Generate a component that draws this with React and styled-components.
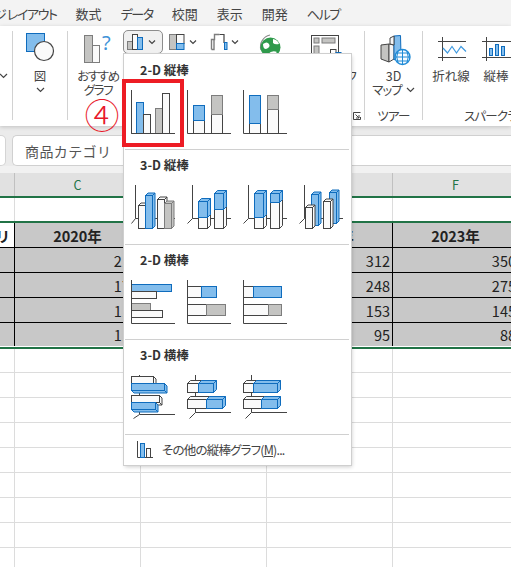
import React from "react";
import styled, { createGlobalStyle } from "styled-components";

const Global = createGlobalStyle`
  html, body { margin: 0; padding: 0; background: #fff; }
  * { box-sizing: border-box; }
`;

const C = {
  dark: "#444",
  white: "#fafafa",
  blue: "#83bdec",
  blueS: "#0f6cbd",
  gray: "#c4c4c2",
  grayS: "#7d7d7d",
  green: "#217346",
};
const fills = {
  w: [C.white, C.dark],
  b: [C.blue, C.blueS],
  g: [C.gray, C.grayS],
};

const Page = styled.div`
  position: relative;
  width: 511px;
  height: 567px;
  overflow: hidden;
  background: #fff;
  color: #444;
  font-family: "Noto Sans CJK JP", "Noto Sans", sans-serif;
  font-feature-settings: "palt";
`;
const TabBar = styled.nav`
  display: flex;
  gap: 19px;
  height: 26px;
  align-items: center;
  background: #f3f3f3;
  font-size: 13px;
  white-space: nowrap;
  overflow: hidden;
`;
const Tab = styled.span`
  margin-left: ${(p) => p.$offset || 0}px;
  letter-spacing: ${(p) => (p.$kana ? -1.4 : 0)}px;
`;
const Ribbon = styled.section`
  position: relative;
  display: flex;
  height: 100px;
  background: #fff;
  box-shadow: 0 1px 4px rgba(0, 0, 0, 0.18);
`;
const Sep = styled.div`
  flex: none;
  width: 1px;
  margin: 5px 0 6px;
  background: #d2d2d2;
`;
const Group = styled.div`
  flex: none;
  width: ${(p) => p.$w}px;
  display: flex;
  flex-direction: column;
  padding-top: 5px;
`;
const GroupBody = styled.div`
  display: flex;
  height: 78px;
  padding-left: ${(p) => p.$pad || 0}px;
`;
const GroupFooter = styled.div`
  display: flex;
  height: 14px;
  align-items: center;
  justify-content: ${(p) => p.$align || "center"};
  padding-left: ${(p) => p.$pad || 0}px;
  padding-right: ${(p) => p.$padR || 0}px;
  font-size: 12.5px;
  line-height: 14px;
  letter-spacing: -0.8px;
  white-space: nowrap;
`;
const BigButton = styled.div`
  flex: none;
  width: ${(p) => p.$w}px;
  margin-left: ${(p) => p.$ml || 0}px;
  display: flex;
  flex-direction: column;
  align-items: center;
  font-size: 12.5px;
  line-height: 14px;
  white-space: nowrap;
`;
const KanaLabel = styled.span`
  letter-spacing: -${(p) => p.$tight || 0.9}px;
`;
const Slot = styled.svg`
  display: block;
  flex: none;
  width: ${(p) => p.$w}px;
  height: 38px;
`;
const SmallRow = styled.div`
  flex: none;
  width: 132px;
  display: flex;
  align-items: flex-start;
`;
const SmallButton = styled.div`
  flex: none;
  width: ${(p) => p.$w}px;
  height: 24px;
  margin-top: -1px;
  border-radius: 5px;
  border: 1px solid ${(p) => (p.$active ? "#8c8c8c" : "transparent")};
  background: ${(p) => (p.$active ? "#f0f0f0" : "transparent")};
`;
const SmallIcon = styled.svg`
  display: block;
  width: 100%;
  height: 100%;
  overflow: visible;
`;
const ChevronMark = styled.svg`
  display: ${(p) => (p.$inline ? "inline-block" : "block")};
  width: 9px;
  height: 6px;
  margin-left: ${(p) => (p.$inline ? 4 : 0)}px;
  vertical-align: 2px;
`;
const ChevronRow = styled.div`
  display: flex;
  height: 14px;
  align-items: center;
  justify-content: ${(p) => (p.$start ? "flex-start" : "center")};
  margin-left: ${(p) => p.$ml || 0}px;
`;
const LauncherIcon = styled.svg`
  display: block;
  flex: none;
  width: 8px;
  height: 8px;
`;
const FormulaBack = styled.div`
  height: 9px;
  background: #ebebeb;
`;
const FormulaBar = styled.div`
  display: flex;
  gap: 6px;
  height: 31px;
  background: #ebebeb;
`;
const NameBox = styled.div`
  flex: none;
  width: 6px;
  background: #fff;
  border: 1px solid #d4d4d4;
  border-left: none;
  border-radius: 0 5px 5px 0;
`;
const FormulaInput = styled.div`
  flex: 1;
  display: flex;
  align-items: center;
  padding-left: 12px;
  background: #fff;
  border: 1px solid #d0d0d0;
  border-right: none;
  border-radius: 5px 0 0 5px;
  color: #555;
  font-size: 14px;
  letter-spacing: 0.4px;
  font-feature-settings: normal;
`;
const SheetGap = styled.div`
  height: 7px;
  background: #f1f1f1;
`;
const Row = styled.div`
  display: grid;
  grid-template-columns: 15px repeat(4, 126px) 1fr;
  height: ${(p) => p.$h || 25}px;
  border-top: ${(p) => (p.$greenTop ? `2px solid ${C.green}` : "none")};
  border-bottom: ${(p) => (p.$greenBottom ? `2px solid ${C.green}` : "none")};
  padding-bottom: ${(p) => (p.$greenBottom ? 1 : 0)}px;
`;
const HeaderCell = styled.div`
  display: flex;
  align-items: center;
  justify-content: center;
  background: #e1e1e1;
  border-right: 1px solid #c0c0c0;
  color: ${C.green};
  font-size: 12.5px;
`;
const GridCell = styled.div`
  border-right: 1px solid #dcdcdc;
  border-bottom: ${(p) => (p.$line ? "1px solid #dcdcdc" : "none")};
`;
const DataCell = styled.div`
  display: flex;
  align-items: center;
  justify-content: ${(p) => (p.$head ? "center" : "flex-end")};
  padding-right: ${(p) => (p.$head ? 0 : 2)}px;
  background: ${(p) => (p.$plain ? "#fff" : "#c8c8c8")};
  border-right: 1px solid #000;
  border-bottom: ${(p) => (p.$last ? "none" : "1px solid #000")};
  color: #222;
  font-size: 14.5px;
  font-weight: ${(p) => (p.$head ? 700 : 400)};
  white-space: nowrap;
  overflow: hidden;
  font-feature-settings: normal;
`;
const KeyCell = styled(DataCell)`
  justify-content: flex-end;
  padding-right: 4px;
`;
const Menu = styled.div`
  position: absolute;
  left: 124px;
  top: 54px;
  width: 227px;
  height: 411px;
  padding-top: 1px;
  background: #fff;
  box-shadow: 0 0 0 1px #cfcfcf, 1px 2px 4px rgba(0, 0, 0, 0.2);
`;
const MenuSection = styled.div`
  height: 95px;
  padding-top: 6px;
  position: relative;
`;
const MenuDivider = styled.div`
  position: absolute;
  left: 1px;
  right: 2px;
  bottom: 0;
  height: 1px;
  background: #d0d0d0;
`;
const MenuTitle = styled.div`
  height: 17px;
  margin: 0 0 12px 16px;
  font-size: 12.5px;
  line-height: 17px;
  font-weight: 700;
  color: #333;
  font-feature-settings: normal;
`;
const ChartRow = styled.div`
  display: flex;
  gap: 12px;
  padding-left: 7px;
`;
const ChartIcon = styled.svg`
  display: block;
  flex: none;
  width: 44px;
  height: 44px;
`;
const MenuFooter = styled.div`
  display: flex;
  align-items: center;
  gap: 9px;
  height: 29px;
  padding-left: 13px;
  font-size: 12.5px;
  letter-spacing: -0.8px;
  color: #444;
`;
const Underlined = styled.span`
  text-decoration: underline;
`;
const Highlight = styled.div`
  position: absolute;
  left: 122px;
  top: 79px;
  width: 62px;
  height: 68px;
  border: 4px solid #ed1c24;
`;
const StepMark = styled.div`
  position: absolute;
  left: 82px;
  top: 93px;
  width: 40px;
  height: 42px;
  display: flex;
  align-items: center;
  justify-content: center;
  color: #e8182a;
  font-size: 35px;
  font-weight: 300;
  line-height: 42px;
  font-feature-settings: normal;
`;

const Chevron = ({ inline }) => (
  <ChevronMark $inline={inline} viewBox="0 0 9 6">
    <path d="M1 1l3.5 3.5L8 1" fill="none" stroke="#444" strokeWidth="1.2" />
  </ChevronMark>
);

const R = ({ x, y, x2, y2, k }) => (
  <rect x={x} y={y} width={x2 - x} height={y2 - y} fill={fills[k][0]} stroke={fills[k][1]} />
);
const Axes2D = () => <path d="M.5 0V43.5H44" fill="none" stroke={C.dark} />;
const Axes3D = ({ x = 5.5, y = 33.5 }) => (
  <path d={`M${x} 0V${y}H44M${x} ${y}L0.5 ${y + 5}`} fill="none" stroke={C.dark} />
);
const Box3D = ({ x, y, w, h, k, d = 2.5, top = true }) => (
  <g fill={fills[k][0]} stroke={fills[k][1]}>
    {top && <polygon points={`${x},${y} ${x + d},${y - d} ${x + w + d},${y - d} ${x + w},${y}`} />}
    <polygon points={`${x + w},${y} ${x + w + d},${y - d} ${x + w + d},${y + h - d} ${x + w},${y + h}`} />
    <rect x={x} y={y} width={w} height={h} />
  </g>
);
const HBox = ({ x, y, w, h, k, d = 2.5 }) => (
  <g fill={fills[k][0]} stroke={fills[k][1]}>
    <polygon points={`${x + w},${y} ${x + w + d},${y + d} ${x + w + d},${y + h + d} ${x + w},${y + h}`} />
    <polygon points={`${x},${y + h} ${x + w},${y + h} ${x + w + d},${y + h + d} ${x + d},${y + h + d}`} />
    <rect x={x} y={y} width={w} height={h} />
  </g>
);
const SBox = ({ x, y, w, h, k, d = 3 }) => <Box3D x={x} y={y} w={w} h={h} k={k} d={d} />;

const Icon = ({ children }) => <ChartIcon viewBox="0 0 44 44">{children}</ChartIcon>;

const Column2D = [
  <Icon key="a">
    <Axes2D />
    <R x={5.5} y={12.5} x2={12.5} y2={43.5} k="b" />
    <R x={12.5} y={24.5} x2={19.5} y2={43.5} k="w" />
    <R x={24.5} y={18.5} x2={31.5} y2={43.5} k="g" />
    <R x={31.5} y={3.5} x2={38.5} y2={43.5} k="w" />
    <Axes2D />
  </Icon>,
  <Icon key="b">
    <R x={6.5} y={30.5} x2={17.5} y2={43.5} k="w" />
    <R x={6.5} y={15.5} x2={17.5} y2={30.5} k="b" />
    <R x={24.5} y={24.5} x2={35.5} y2={43.5} k="w" />
    <R x={24.5} y={5.5} x2={35.5} y2={24.5} k="g" />
    <Axes2D />
  </Icon>,
  <Icon key="c">
    <R x={6.5} y={33.5} x2={17.5} y2={43.5} k="w" />
    <R x={6.5} y={5.5} x2={17.5} y2={33.5} k="b" />
    <R x={24.5} y={19.5} x2={35.5} y2={43.5} k="w" />
    <R x={24.5} y={5.5} x2={35.5} y2={19.5} k="g" />
    <Axes2D />
  </Icon>,
];

const Column3D = [
  <Icon key="a">
    <Axes3D x={4.5} />
    <Box3D x={7.5} y={20.5} w={7} h={23} k="w" />
    <Box3D x={14.5} y={10.5} w={7} h={33} k="b" />
    <Box3D x={26.5} y={14.5} w={7} h={29} k="w" />
    <Box3D x={33.5} y={18.5} w={7} h={25} k="g" />
  </Icon>,
  <Icon key="b">
    <Axes3D />
    <SBox x={11.5} y={32.5} w={9} h={11} k="w" />
    <SBox x={11.5} y={16.5} w={9} h={16} k="b" />
    <SBox x={27.5} y={24.5} w={9} h={19} k="w" />
    <SBox x={27.5} y={8.5} w={9} h={16} k="b" />
  </Icon>,
  <Icon key="c">
    <Axes3D />
    <SBox x={11.5} y={32.5} w={9} h={11} k="w" />
    <SBox x={11.5} y={8.5} w={9} h={24} k="b" />
    <SBox x={27.5} y={17.5} w={9} h={26} k="w" />
    <SBox x={27.5} y={8.5} w={9} h={9} k="b" />
  </Icon>,
  <Icon key="d">
    <Axes3D />
    <Box3D x={12.5} y={9.5} w={7} h={31} k="b" />
    <Box3D x={30.5} y={7.5} w={7} h={31} k="b" />
    <Box3D x={6.5} y={22.5} w={7} h={21} k="w" />
    <Box3D x={24.5} y={16.5} w={7} h={27} k="w" />
  </Icon>,
];

const Bar2D = [
  <Icon key="a">
    <R x={0.5} y={4.5} x2={40.5} y2={11.5} k="b" />
    <R x={0.5} y={11.5} x2={25.5} y2={18.5} k="w" />
    <R x={0.5} y={23.5} x2={19.5} y2={30.5} k="g" />
    <R x={0.5} y={30.5} x2={31.5} y2={37.5} k="w" />
    <Axes2D />
  </Icon>,
  <Icon key="b">
    <R x={0.5} y={6.5} x2={14.5} y2={17.5} k="w" />
    <R x={14.5} y={6.5} x2={29.5} y2={17.5} k="b" />
    <R x={0.5} y={24.5} x2={19.5} y2={35.5} k="w" />
    <R x={19.5} y={24.5} x2={38.5} y2={35.5} k="g" />
    <Axes2D />
  </Icon>,
  <Icon key="c">
    <R x={0.5} y={6.5} x2={10.5} y2={17.5} k="w" />
    <R x={10.5} y={6.5} x2={38.5} y2={17.5} k="b" />
    <R x={0.5} y={24.5} x2={25.5} y2={35.5} k="w" />
    <R x={25.5} y={24.5} x2={38.5} y2={35.5} k="g" />
    <Axes2D />
  </Icon>,
];

const HAxes = ({ y = 37.5, x = 8.5 }) => (
  <path d={`M${x} 0V${y}H44M${x} ${y}L2.5 ${y + 6}`} fill="none" stroke={C.dark} />
);

const Bar3D = [
  <Icon key="a">
    <path d="M8.5 0V3M8.5 16V21M8.5 36V39.5H44M8.5 39.5L2.5 43.5" fill="none" stroke={C.dark} />
    <HBox x={0.5} y={1.5} w={22} h={7} k="w" />
    <HBox x={0.5} y={8.5} w={33} h={7} k="b" />
    <HBox x={0.5} y={20.5} w={28} h={7} k="w" />
    <HBox x={0.5} y={27.5} w={24} h={7} k="b" />
  </Icon>,
  <Icon key="b">
    <HAxes />
    <SBox x={0.5} y={8.5} w={11} h={9} k="w" />
    <SBox x={11.5} y={8.5} w={15} h={9} k="b" />
    <SBox x={0.5} y={24.5} w={19} h={9} k="w" />
    <SBox x={19.5} y={24.5} w={16} h={9} k="b" />
  </Icon>,
  <Icon key="c">
    <HAxes />
    <SBox x={0.5} y={8.5} w={10} h={9} k="w" />
    <SBox x={10.5} y={8.5} w={24} h={9} k="b" />
    <SBox x={0.5} y={24.5} w={18} h={9} k="w" />
    <SBox x={18.5} y={24.5} w={16} h={9} k="b" />
  </Icon>,
];

const sections = [
  { title: "2-D 縦棒", icons: Column2D },
  { title: "3-D 縦棒", icons: Column3D },
  { title: "2-D 横棒", icons: Bar2D },
  { title: "3-D 横棒", icons: Bar3D },
];

const rows = [
  ["215", "300", "312", "350"],
  ["171", "220", "248", "275"],
  ["112", "140", "153", "145"],
  ["117", "100", "95", "88"],
];

const BlankRow = ({ h, line = true, greenTop, greenBottom }) => (
  <Row $h={h} $greenTop={greenTop} $greenBottom={greenBottom}>
    {[0, 1, 2, 3, 4, 5].map((i) => (
      <GridCell key={i} $line={line} />
    ))}
  </Row>
);

export default function App() {
  return (
    <Page>
      <Global />
      <TabBar>
        <Tab $offset={-29} $kana>ページ レイアウト</Tab>
        <Tab>数式</Tab>
        <Tab $kana>データ</Tab>
        <Tab>校閲</Tab>
        <Tab>表示</Tab>
        <Tab>開発</Tab>
        <Tab $kana>ヘルプ</Tab>
      </TabBar>
      <Ribbon>
        <Group $w={12}>
          <GroupBody>
            <BigButton $w={12}>
              <Slot $w={12} viewBox="0 0 12 38" />
              <ChevronRow $start $ml={-5}>
                <Chevron />
              </ChevronRow>
            </BigButton>
          </GroupBody>
        </Group>
        <Sep />
        <Group $w={54}>
          <GroupBody>
            <BigButton $w={54}>
              <Slot $w={54} viewBox="13 31 54 38">
                <rect x="26.5" y="33.5" width="18" height="18" fill={C.blue} stroke={C.blueS} />
                <circle cx="44" cy="51" r="9.5" fill="#fafafa" stroke="#444" strokeWidth="1.2" />
              </Slot>
              <span>図</span>
              <ChevronRow>
                <Chevron />
              </ChevronRow>
            </BigButton>
          </GroupBody>
        </Group>
        <Sep />
        <Group $w={296}>
          <GroupBody>
            <BigButton $w={50} $ml={5}>
              <Slot $w={50} viewBox="73 31 50 38">
                <rect x="84.5" y="35.5" width="8" height="27" fill={C.gray} stroke={C.grayS} />
                <rect x="92.5" y="45.5" width="7" height="17" fill={C.white} stroke={C.grayS} />
                <text x="102" y="50" fontSize="20" fill="#3f93d8" fontFamily="Noto Sans">?</text>
              </Slot>
              <KanaLabel $tight={1.4}>おすすめ</KanaLabel>
              <KanaLabel $tight={1.4}>グラフ</KanaLabel>
            </BigButton>
            <SmallRow>
              <SmallButton $w={40} $active>
                <SmallIcon viewBox="124 31 38 22">
                  <rect x="127.5" y="41.5" width="5" height="8" fill={C.gray} stroke={C.grayS} />
                  <rect x="132.5" y="34.5" width="5" height="15" fill={C.white} stroke={C.dark} />
                  <rect x="137.5" y="37.5" width="5" height="12" fill={C.blue} stroke={C.blueS} />
                  <path d="M149 40.5l3 3 3-3" fill="none" stroke="#444" strokeWidth="1.2" />
                </SmallIcon>
              </SmallButton>
              <SmallButton $w={42}>
                <SmallIcon viewBox="164 31 40 22">
                  <rect x="169.5" y="34.5" width="7" height="15" fill={C.gray} stroke={C.grayS} />
                  <rect x="176.5" y="34.5" width="7.5" height="9" fill={C.white} stroke={C.dark} />
                  <rect x="176.5" y="43.5" width="7.5" height="6" fill={C.blue} stroke={C.blueS} />
                  <path d="M190 40.5l3 3 3-3" fill="none" stroke="#444" strokeWidth="1.2" />
                </SmallIcon>
              </SmallButton>
              <SmallButton $w={42}>
                <SmallIcon viewBox="206 31 40 22">
                  <path d="M211.5 49.5V39.5H214.5V34.5H219.5" fill="none" stroke={C.grayS} strokeWidth="1.4" />
                  <path d="M211.5 49.5h2.5V39.5" fill="none" stroke={C.grayS} strokeWidth="1.4" />
                  <path d="M219.5 34.5H224V42.5H227" fill="none" stroke={C.dark} strokeWidth="1.2" />
                  <rect x="224.5" y="42.5" width="2.5" height="7" fill={C.blue} stroke={C.blueS} />
                  <path d="M232 40.5l3 3 3-3" fill="none" stroke="#444" strokeWidth="1.2" />
                </SmallIcon>
              </SmallButton>
            </SmallRow>
            <BigButton $w={30}>
              <Slot $w={30} viewBox="255 31 30 38">
                <path d="M261 50a12 12 0 0 1 9-15" fill="none" stroke="#888" strokeWidth="1.2" />
                <circle cx="270.5" cy="47.5" r="10" fill="#2f9a4c" />
                <path d="M263 44q4-3 6 0t-3 5q-3 0-3-5zM273 39q5 1 6 5-4 1-6-1zM268 54q4-4 9-2-4 5-9 2z" fill="#fff" />
              </Slot>
              <KanaLabel>マップ</KanaLabel>
            </BigButton>
            <BigButton $w={70} $ml={5}>
              <Slot $w={70} viewBox="290 31 70 38">
                <rect x="311.5" y="35.5" width="27" height="28" fill="#fff" stroke={C.dark} />
                <rect x="314" y="38" width="5" height="5" fill={C.gray} stroke={C.grayS} />
                <rect x="322" y="38" width="13" height="5" fill={C.gray} stroke={C.grayS} />
                <rect x="314" y="46" width="5" height="14" fill={C.gray} stroke={C.grayS} />
                <rect x="330.5" y="49.5" width="5.5" height="12" fill="#fff" stroke={C.dark} />
                <rect x="336" y="52.5" width="5" height="9" fill={C.blue} stroke={C.blueS} />
              </Slot>
              <KanaLabel $tight={2.4}>ピボットグラフ</KanaLabel>
            </BigButton>
          </GroupBody>
          <GroupFooter $align="flex-end" $padR={3}>
            <LauncherIcon viewBox="0 0 8 8">
              <path d="M.5 7.500V.5h7M2.500 2.500l3.500 3.500M6 3v3H3M.5 7.500h7V5" fill="none" stroke="#444" />
            </LauncherIcon>
          </GroupFooter>
        </Group>
        <Sep />
        <Group $w={57}>
          <GroupBody>
            <BigButton $w={57}>
              <Slot $w={57} viewBox="365 31 57 38">
                <polygon points="381,45 389,44 389,62 381,59" fill={C.gray} stroke={C.dark} />
                <polygon points="389,44 394,45 394,59 389,62" fill="#f4f4f4" stroke={C.dark} />
                <polygon points="394,36 400.5,35.5 401,55 394,60" fill={C.blue} stroke={C.blueS} />
                <polygon points="394,36 390,38 390,44 394,45" fill="#f6f6f6" stroke={C.dark} />
                <circle cx="402.5" cy="57" r="7.5" fill="#f7fbff" stroke="#1f8ad6" strokeWidth="1.4" />
                <path d="M395 57h15M402.5 49.5v15M398 51.5q-2.5 5.500 0 11M407 51.500q2.500 5.500 0 11M396.500 53h12M396.500 61h12" fill="none" stroke="#1f8ad6" />
              </Slot>
              <span>3D</span>
              <KanaLabel>
                マップ
                <Chevron inline />
              </KanaLabel>
            </BigButton>
          </GroupBody>
          <GroupFooter>ツアー</GroupFooter>
        </Group>
        <Sep />
        <Group $w={88}>
          <GroupBody $pad={3}>
            <BigButton $w={50}>
              <Slot $w={50} viewBox="426 31 50 38">
                <path d="M442.500 37v24M438 41.500h28M438 57.500h28" fill="none" stroke={C.dark} />
                <path d="M443 48l4.500 5 4.500-6.500 4.500 6.500 4.500-6.500 5 5" fill="none" stroke="#3f9ae0" strokeWidth="1.2" />
              </Slot>
              <span>折れ線</span>
            </BigButton>
            <BigButton $w={40}>
              <Slot $w={40} viewBox="476 31 40 38">
                <path d="M486.500 37v24M482 41.500h29M482 57.500h29" fill="none" stroke={C.dark} />
                <rect x="489.500" y="48.500" width="3" height="7" fill={C.blue} stroke={C.blueS} />
                <rect x="495.500" y="44.500" width="3" height="11" fill={C.blue} stroke={C.blueS} />
                <rect x="501.500" y="46.500" width="3" height="9" fill={C.blue} stroke={C.blueS} />
              </Slot>
              <span>縦棒</span>
            </BigButton>
          </GroupBody>
          <GroupFooter $align="flex-start" $pad={41}>スパークライン</GroupFooter>
        </Group>
      </Ribbon>
      <FormulaBack />
      <FormulaBar>
        <NameBox />
        <FormulaInput>商品カテゴリ</FormulaInput>
      </FormulaBar>
      <SheetGap />
      <Row $h={23}>
        {["", "C", "D", "E", "F", ""].map((c, i) => (
          <HeaderCell key={i}>{c}</HeaderCell>
        ))}
      </Row>
      <BlankRow h={25} line={false} greenTop />
      <Row $h={27} $greenTop>
        <KeyCell $head $plain>商品カテゴリ</KeyCell>
        {["2020年", "2021年", "2022年", "2023年"].map((y) => (
          <DataCell key={y} $head>{y}</DataCell>
        ))}
        <DataCell />
      </Row>
      {rows.map((r, i) => {
        const last = i === rows.length - 1;
        return (
          <Row key={i} $h={last ? 26 : 25} $greenBottom={last}>
            <DataCell $last={last} />
            {r.map((v, j) => (
              <DataCell key={j} $last={last}>{v}</DataCell>
            ))}
            <DataCell $last={last} />
          </Row>
        );
      })}
      <BlankRow h={24} />
      {Array.from({ length: 8 }).map((_, i) => (
        <BlankRow key={i} />
      ))}
      <Menu>
        {sections.map((s) => (
          <MenuSection key={s.title}>
            <MenuTitle>{s.title}</MenuTitle>
            <ChartRow>{s.icons}</ChartRow>
            <MenuDivider />
          </MenuSection>
        ))}
        <MenuFooter>
          <svg width="16" height="17" viewBox="0 0 16 17">
            <path d="M.5 0v16.500H16" fill="none" stroke={C.dark} />
            <rect x="3.500" y="2.500" width="4" height="14" fill={C.blue} stroke={C.blueS} />
            <rect x="9.500" y="7.500" width="4" height="9" fill={C.white} stroke={C.dark} />
          </svg>
          <span>
            その他の縦棒グラフ(<Underlined>M</Underlined>)...
          </span>
        </MenuFooter>
      </Menu>
      <Highlight />
      <StepMark>④</StepMark>
    </Page>
  );
}
